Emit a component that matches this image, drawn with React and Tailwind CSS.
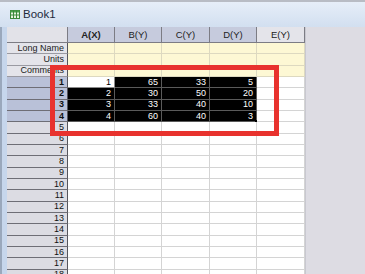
import React from "react";

const data = [
  [1, 65, 33, 5],
  [2, 30, 50, 20],
  [3, 33, 40, 10],
  [4, 60, 40, 3],
];

function BookIcon() {
  return (
    <svg width="10" height="9" viewBox="0 0 10 9" className="shrink-0">
      <rect x="0.5" y="0.5" width="9" height="8" fill="#e8f4e0" stroke="#3c8a3c" />
      <rect x="0.5" y="0.5" width="9" height="2" fill="#4aa04a" />
      <line x1="3.5" y1="0.5" x2="3.5" y2="8.5" stroke="#3c8a3c" />
      <line x1="6.5" y1="0.5" x2="6.5" y2="8.5" stroke="#3c8a3c" />
      <line x1="0.5" y1="5" x2="9.5" y2="5" stroke="#3c8a3c" />
    </svg>
  );
}

export default function App() {
  const labelRows = ["Long Name", "Units", "Comments"];
  const headers = ["A(X)", "B(Y)", "C(Y)", "D(Y)", "E(Y)"];
  const rows = Array.from({ length: 19 }, (_, i) => i + 1);

  return (
    <div
      className="relative w-[365px] h-[274px] overflow-hidden bg-[#dddce3] flex flex-col"
      style={{ fontFamily: '"Liberation Sans", Arial, sans-serif' }}
    >
      {/* Title bar */}
      <div className="h-[27px] shrink-0 border-t-2 border-[#b8bcc4] bg-gradient-to-b from-[#e6eef8] to-[#d2dff0] flex items-center pl-[10px] gap-[3px]">
        <BookIcon />
        <span className="text-[11.5px] text-[#1e2a3c] leading-none">Book1</span>
      </div>

      {/* Body */}
      <div className="flex flex-1 min-h-0">
        <div className="w-[7px] shrink-0 bg-[#c6d6ec] border-l-2 border-[#9aa8bc]" />
        <div
          className="w-[298px] shrink-0 grid grid-cols-[61px_47px_47px_48px_47px_48px] grid-rows-[16px] auto-rows-[11.33px] overflow-hidden bg-white text-[9px] leading-none"
        >
          {/* Header row */}
          <div className="bg-[#e2e2e8] border-r border-b border-[#7c7c84]" />
          {headers.map((h, i) => (
            <div
              key={h}
              className={
                "flex items-center justify-center border-r border-b border-[#7c7c84] text-[9.5px] text-[#222] " +
                (i < 4 ? "bg-[#c6cbdd] " : "bg-[#e4e4ea] ") +
                (i === 0 ? "font-bold" : "")
              }
            >
              {h}
            </div>
          ))}

          {/* Label rows */}
          {labelRows.map((l) => (
            <React.Fragment key={l}>
              <div className="bg-[#e4e4ea] border-r border-r-[#55555c] border-b border-b-[#9a9aa2] flex items-center justify-end pr-[3px] text-[#222]">
                {l}
              </div>
              {headers.map((h) => (
                <div key={h} className="bg-[#fdf8d4] border-r border-b border-[#ddd9c0]" />
              ))}
            </React.Fragment>
          ))}

          {/* Data rows */}
          {rows.map((r) => {
            const sel = r <= 4;
            return (
              <React.Fragment key={r}>
                <div
                  className={
                    "border-r border-r-[#55555c] border-b border-b-[#6e6e76] flex items-center justify-end pr-[3px] text-[#111] " +
                    (sel ? "bg-[#b9c1d8] font-bold" : "bg-[#dcdce3]")
                  }
                >
                  {r}
                </div>
                {headers.map((h, c) => {
                  const v = sel && c < 4 ? data[r - 1][c] : null;
                  const active = r === 1 && c === 0;
                  let cls = "relative flex items-center justify-end pr-[3px] border-r border-b ";
                  if (sel && c < 4) {
                    cls += active
                      ? "bg-white text-black border-[#8a8a8a]"
                      : "bg-black text-white border-[#5a5a5a]";
                  } else {
                    cls += "bg-white border-[#d4d4d4]";
                  }
                  return (
                    <div key={h} className={cls}>
                      {v}
                      {r === 4 && c === 3 && (
                        <span className="absolute right-[-2px] bottom-[-2px] w-[3px] h-[3px] bg-black" />
                      )}
                    </div>
                  );
                })}
              </React.Fragment>
            );
          })}
        </div>
        <div className="flex-1 border-l border-[#c8c8d0] bg-[#dddce3]" />
      </div>

      {/* Red highlight rectangle */}
      <div className="absolute left-[50px] top-[65px] w-[229px] h-[71px] border-[5px] border-[#e8322e] pointer-events-none" />
    </div>
  );
}
